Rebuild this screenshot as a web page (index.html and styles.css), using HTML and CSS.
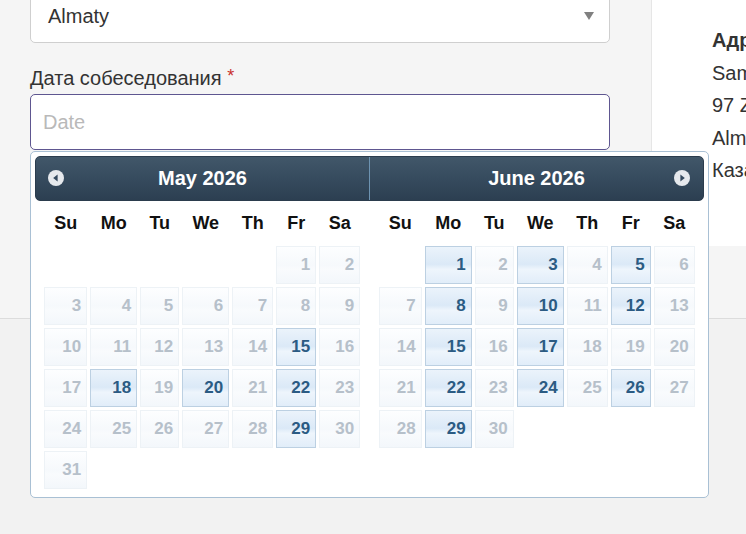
FILE: index.html
```html
<!DOCTYPE html>
<html lang="ru">
<head>
<meta charset="utf-8">
<title>Дата собеседования</title>
<link rel="stylesheet" href="styles.css">
</head>
<body>
<div class="page">
  <div class="top">
    <div class="form-col">
      <div class="select">
        <span class="select-text">Almaty</span>
        <svg class="caret" width="10" height="8" viewBox="0 0 10 8"><path d="M0 0 H10 L5 8 Z" fill="#808080"/></svg>
      </div>
      <div class="label">Дата собеседования <span class="req">*</span></div>
      <div class="input"><span class="ph">Date</span></div>
    </div>
    <div class="info-col">
      <div class="info-title">Адрес офиса</div>
      <div class="info-line">Samal Towers</div>
      <div class="info-line">97 Zholdasbekov St.</div>
      <div class="info-line">Almaty</div>
      <div class="info-line">Казахстан</div>
    </div>
  </div>

  <div class="datepicker">
    <div class="dp-header">
      <div class="dp-title">May 2026</div>
      <div class="dp-title dp-title-right">June 2026</div>
      <span class="dp-nav dp-prev"><svg width="16" height="16" viewBox="0 0 16 16"><circle cx="8" cy="8" r="8" fill="#e6e9ed"/><path d="M9.6 4.6 V11.4 L5.2 8 Z" fill="#34495e"/></svg></span>
      <span class="dp-nav dp-next"><svg width="16" height="16" viewBox="0 0 16 16"><circle cx="8" cy="8" r="8" fill="#e6e9ed"/><path d="M6.4 4.6 V11.4 L10.8 8 Z" fill="#34495e"/></svg></span>
    </div>
    <div class="dp-body">
      <div class="dp-group">
        <div class="dp-grid">
          <div class="wd">Su</div><div class="wd">Mo</div><div class="wd">Tu</div><div class="wd">We</div><div class="wd">Th</div><div class="wd">Fr</div><div class="wd">Sa</div>
          <div></div><div></div><div></div><div></div><div></div>
          <div class="d off">1</div><div class="d off">2</div>
          <div class="d off">3</div><div class="d off">4</div><div class="d off">5</div><div class="d off">6</div><div class="d off">7</div><div class="d off">8</div><div class="d off">9</div>
          <div class="d off">10</div><div class="d off">11</div><div class="d off">12</div><div class="d off">13</div><div class="d off">14</div><div class="d on">15</div><div class="d off">16</div>
          <div class="d off">17</div><div class="d on">18</div><div class="d off">19</div><div class="d on">20</div><div class="d off">21</div><div class="d on">22</div><div class="d off">23</div>
          <div class="d off">24</div><div class="d off">25</div><div class="d off">26</div><div class="d off">27</div><div class="d off">28</div><div class="d on">29</div><div class="d off">30</div>
          <div class="d off">31</div>
        </div>
      </div>
      <div class="dp-group">
        <div class="dp-grid">
          <div class="wd">Su</div><div class="wd">Mo</div><div class="wd">Tu</div><div class="wd">We</div><div class="wd">Th</div><div class="wd">Fr</div><div class="wd">Sa</div>
          <div></div>
          <div class="d on">1</div><div class="d off">2</div><div class="d on">3</div><div class="d off">4</div><div class="d on">5</div><div class="d off">6</div>
          <div class="d off">7</div><div class="d on">8</div><div class="d off">9</div><div class="d on">10</div><div class="d off">11</div><div class="d on">12</div><div class="d off">13</div>
          <div class="d off">14</div><div class="d on">15</div><div class="d off">16</div><div class="d on">17</div><div class="d off">18</div><div class="d off">19</div><div class="d off">20</div>
          <div class="d off">21</div><div class="d on">22</div><div class="d off">23</div><div class="d on">24</div><div class="d off">25</div><div class="d on">26</div><div class="d off">27</div>
          <div class="d off">28</div><div class="d on">29</div><div class="d off">30</div>
        </div>
      </div>
    </div>
  </div>
</div>
</body>
</html>
```

FILE: styles.css
```css
* { box-sizing: border-box; }
html, body {
  margin: 0;
  padding: 0;
  width: 746px;
  height: 534px;
  overflow: hidden;
  background: #f2f2f2;
  font-family: "Liberation Sans", Arial, sans-serif;
  color: #333;
}
.page {
  position: relative;
  width: 746px;
  height: 534px;
}
.top {
  display: flex;
  height: 319px;
  border-bottom: 1px solid #dcdcdc;
  background: #f5f5f5;
}
.form-col {
  width: 652px;
  flex: none;
  padding: 0 41px 0 30px;
  border-right: 1px solid #e6e6e6;
}
.select {
  margin-top: -11px;
  height: 54px;
  background: #fff;
  border: 1px solid #cfcfcf;
  border-radius: 5px;
  display: flex;
  align-items: center;
  justify-content: space-between;
  padding: 0 15px 0 17px;
}
.select-text {
  font-size: 20px;
  color: #333;
}
.caret { display: block; margin-top: -1px; }
.label {
  margin-top: 21px;
  font-size: 20px;
  line-height: 24px;
  color: #333;
}
.req {
  color: #c9302c;
  font-size: 18px;
  vertical-align: 3px;
}
.input {
  margin-top: 4px;
  height: 56px;
  background: #fff;
  border: 1px solid #5e5690;
  border-radius: 5px;
  display: flex;
  align-items: center;
  padding-left: 12px;
}
.ph {
  font-size: 20px;
  color: #b9b9b9;
}
.info-col {
  flex: 1;
  align-self: flex-start;
  height: 246px;
  background: #fff;
  padding: 28px 0 0 60px;
  white-space: nowrap;
  overflow: hidden;
}
.info-title {
  font-size: 20px;
  font-weight: bold;
  line-height: 24px;
  color: #333;
}
.info-line {
  font-size: 20px;
  line-height: 24px;
  margin-top: 8.5px;
  color: #333;
}

/* datepicker */
.datepicker {
  position: absolute;
  left: 30px;
  top: 151px;
  width: 679px;
  height: 347px;
  background: #fff;
  border: 1px solid #a9c0d4;
  border-radius: 5px;
  padding: 4px;
}
.dp-header {
  position: relative;
  display: flex;
  height: 45px;
  border-radius: 5px;
  background: linear-gradient(to bottom, #415769 0%, #364b5e 50%, #2c3f51 100%);
  border: 1px solid #2b3c4d;
}
.dp-title {
  flex: 1;
  text-align: center;
  color: #fff;
  font-weight: bold;
  font-size: 20px;
  line-height: 43px;
}
.dp-title-right {
  border-left: 1px solid #6d93b1;
}
.dp-nav {
  position: absolute;
  top: 13px;
  width: 16px;
  height: 16px;
}
.dp-nav svg { display: block; }
.dp-prev { left: 12px; }
.dp-next { right: 13px; }
.dp-body {
  display: flex;
}
.dp-group {
  flex: 1;
}
.dp-grid {
  width: 316px;
  margin: 0 auto;
  display: grid;
  grid-template-columns: 43px 47px 39px 47px 41px 40px 41px;
  grid-template-rows: 42px;
  grid-auto-rows: 38px;
  column-gap: 3px;
  row-gap: 3px;
}
.wd {
  font-weight: bold;
  font-size: 18px;
  color: #111;
  text-align: center;
  line-height: 44px;
}
.d {
  border: 1px solid;
  text-align: right;
  padding-right: 5px;
  font-weight: bold;
  font-size: 17px;
  line-height: 36px;
}
.d.off {
  border-color: #edf2f6;
  background: linear-gradient(to bottom, #fdfeff 0%, #f6f9fc 50%, #f9fbfd 62%, #f3f7fb 100%);
  color: #b6c0ca;
}
.d.on {
  border-color: #bcd0e2;
  background: linear-gradient(to bottom, #ebf3fb 0%, #dbe9f7 48%, #eef5fc 62%, #e1edf9 100%);
  color: #2b5b83;
}
```
